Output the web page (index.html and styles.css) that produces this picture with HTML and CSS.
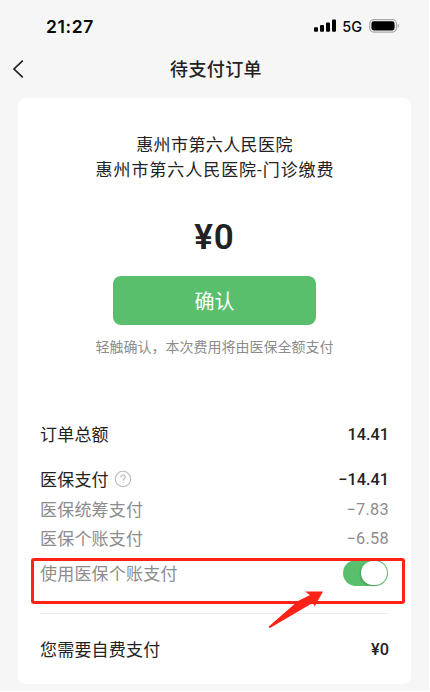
FILE: index.html
```html
<!DOCTYPE html>
<html lang="zh-CN">
<head>
    <meta charset="UTF-8">
    <meta name="viewport" content="width=device-width, initial-scale=1.0">
    <title>待支付订单</title>
    <link rel="stylesheet" href="styles.css">
</head>
<body>
    <div class="page">
        <div class="status-bar">
            <span class="time">21:27</span>
            <div class="status-icons">
                <svg class="signal" width="22" height="13" viewBox="0 0 22 13">
                    <rect x="0" y="8.2" width="4" height="4.6" rx="1"/>
                    <rect x="6" y="6" width="4" height="6.8" rx="1"/>
                    <rect x="12" y="3.4" width="4" height="9.4" rx="1"/>
                    <rect x="18" y="0.4" width="4" height="12.4" rx="1"/>
                </svg>
                <span class="network">5G</span>
                <svg class="battery" width="31" height="14" viewBox="0 0 31 14">
                    <rect x="0.7" y="0.7" width="26.8" height="12.4" rx="4" fill="none" stroke="#aaa" stroke-width="1.2"/>
                    <rect x="2.4" y="2.3" width="23.2" height="9.2" rx="2.4"/>
                    <path d="M28.8 4.8c1.8.6 1.8 3.6 0 4.2z" fill="#aaa"/>
                </svg>
            </div>
        </div>

        <div class="nav-bar">
            <svg class="back" width="12" height="20" viewBox="0 0 12 20">
                <path d="M10.8 1.6L2 10L10.8 18.4" fill="none" stroke="#222" stroke-width="1.7"/>
            </svg>
            <h1>待支付订单</h1>
        </div>

        <div class="card">
            <div class="merchant">
                <div>惠州市第六人民医院</div>
                <div class="service">惠州市第六人民医院-门诊缴费</div>
            </div>
            <div class="amount">¥0</div>
            <button class="confirm">确认</button>
            <div class="tip">轻触确认，本次费用将由医保全额支付</div>

            <div class="detail">
                <div class="row total">
                    <span>订单总额</span>
                    <span class="num">14.41</span>
                </div>
                <div class="row insurance">
                    <span class="label">医保支付
                        <svg class="help" width="18" height="18" viewBox="0 0 18 18" fill="none" stroke="#bbb">
                            <circle cx="9" cy="9" r="7.7" stroke-width="1.1"/>
                            <path d="M6.8 7.3c0-3 4.5-3 4.5-.2 0 1.6-2.2 1.7-2.2 3.6" stroke-width="1.2"/>
                            <circle cx="9.1" cy="12.6" r=".7" fill="#bbb" stroke="none"/>
                        </svg>
                    </span>
                    <span class="num">−14.41</span>
                </div>
                <div class="row sub first">
                    <span>医保统筹支付</span>
                    <span class="num">−7.83</span>
                </div>
                <div class="row sub">
                    <span>医保个账支付</span>
                    <span class="num">−6.58</span>
                </div>
                <div class="row sub account">
                    <span>使用医保个账支付</span>
                    <span class="switch"><i></i></span>
                    <div class="mark"></div>
                    <svg class="arrow" width="56" height="40" viewBox="0 0 56 40">
                        <path d="M55 1.4L37 1.6L42 5L30 11L0.8 36.4Q1 38.6 2.8 37.6L45 12.8L46.7 16.4Z" fill="#fe2316"/>
                    </svg>
                </div>
                <div class="row self-pay">
                    <span>您需要自费支付</span>
                    <span class="num">¥0</span>
                </div>
            </div>
        </div>
    </div>
</body>
</html>
```
FILE: styles.css
```css
* {
    box-sizing: border-box;
}
body {
    margin: 0;
    background: #fff;
    color: #222;
    font-family: Roboto, "Noto Sans CJK SC", sans-serif;
}
.page {
    width: 429px;
    height: 691px;
    background: #f6f6f6;
    overflow: hidden;
}
.status-bar {
    display: flex;
    justify-content: space-between;
    align-items: center;
    height: 52px;
    padding: 0 29px 0 46px;
    color: #0a0a0a;
}
.time {
    font-family: Inter, sans-serif;
    font-size: 17.5px;
    font-weight: 600;
    letter-spacing: 0.6px;
}
.status-icons {
    display: flex;
    align-items: center;
}
.signal {
    margin-bottom: 1px;
}
.network {
    margin: 0 7px 0 6px;
    font-family: Inter, sans-serif;
    font-size: 14.5px;
    font-weight: 500;
}
.nav-bar {
    display: flex;
    align-items: center;
    height: 46px;
    padding: 0 12px 12px;
}
.nav-bar h1 {
    flex: 1;
    margin: 0 12px 0 0;
    padding: 2px 0 0 3px;
    font-size: 18px;
    font-weight: 500;
    line-height: 26px;
    letter-spacing: 0.4px;
    text-align: center;
}
.card {
    display: flex;
    flex-direction: column;
    align-items: center;
    width: 393px;
    height: 586px;
    margin-left: 18px;
    padding: 35px 22px 0;
    background: #fff;
    border-radius: 8px;
}
.merchant {
    font-size: 17px;
    line-height: 25px;
    letter-spacing: 0.4px;
    text-align: center;
}
.service {
    margin-right: -1px;
    letter-spacing: 0.95px;
}
.amount {
    margin-top: 31px;
    font-size: 35px;
    font-weight: 600;
    line-height: 48px;
    letter-spacing: 0.8px;
}
.confirm {
    width: 203px;
    height: 49px;
    margin-top: 14px;
    border: none;
    border-radius: 8px;
    background: #5abf6c;
    color: #fff;
    font-family: inherit;
    font-size: 20px;
    font-weight: 400;
}
.tip {
    margin-top: 12px;
    color: #8c8c8c;
    font-size: 14px;
    line-height: 20px;
}
.detail {
    width: 100%;
    margin-top: 62px;
    font-size: 17px;
    letter-spacing: 0.2px;
}
.row {
    display: flex;
    justify-content: space-between;
    align-items: center;
    height: 29px;
}
.num {
    padding-top: 2px;
    font-size: 16.3px;
    font-weight: 500;
    letter-spacing: 0;
}
.label {
    display: flex;
    align-items: center;
    gap: 5px;
}
.insurance {
    margin-top: 16px;
}
.sub {
    color: #8c8c8c;
}
.sub .num {
    padding-top: 1px;
    font-weight: 400;
    letter-spacing: 0.3px;
}
.first {
    margin-top: 1px;
}
.account {
    position: relative;
    margin-top: 6px;
}
.switch {
    display: flex;
    justify-content: flex-end;
    width: 45px;
    height: 26px;
    margin-right: 1px;
    padding: 1px;
    border-radius: 13px;
    background: #5abf6c;
}
.switch i {
    width: 26px;
    height: 24px;
    border-radius: 12px;
    background: #fff;
    box-shadow: -1px 1px 2px rgba(0,0,0,0.2);
}
.mark {
    position: absolute;
    left: -9px;
    top: 0;
    width: 374px;
    height: 46px;
    border: 3px solid #fe2316;
    border-radius: 3px;
}
.arrow {
    position: absolute;
    left: 228px;
    top: 32px;
}
.self-pay {
    height: 70px;
    margin-top: 26px;
    border-top: 1px solid #eee;
}
```
